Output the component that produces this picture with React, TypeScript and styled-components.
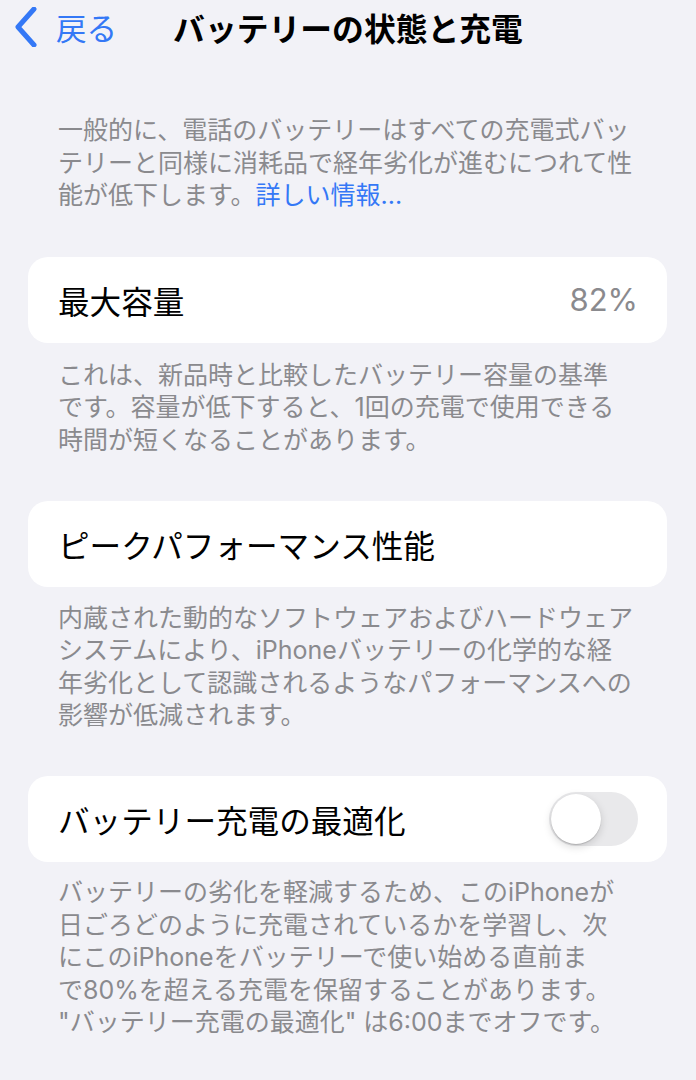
import styled, { createGlobalStyle } from 'styled-components';

const colors = {
  bg: '#f2f2f7',
  card: '#ffffff',
  text: '#000000',
  secondary: '#8a8a8e',
  blue: '#3478f6',
  track: '#e9e9eb',
};

const GlobalStyle = createGlobalStyle`
  html, body {
    margin: 0;
    padding: 0;
    background: ${colors.bg};
  }
  body {
    font-family: Inter, "Noto Sans CJK JP", "Noto Sans", sans-serif;
    -webkit-font-smoothing: antialiased;
  }
`;

const Page = styled.div`
  min-height: 1080px;
  background: ${colors.bg};
  padding: 0 29px 0 28px;
  box-sizing: border-box;
`;

const NavBar = styled.div`
  height: 54px;
  margin: 0 -29px 0 -28px;
  padding: 0 13px;
  display: grid;
  grid-template-columns: 1fr auto 1fr;
  align-items: center;
`;

const BackButton = styled.button`
  justify-self: start;
  display: flex;
  align-items: center;
  gap: 19px;
  padding: 0;
  border: none;
  background: transparent;
  color: ${colors.blue};
  font-family: inherit;
  font-size: 30.5px;
  cursor: pointer;
`;

const Title = styled.h1`
  margin: 0;
  font-size: 31.8px;
  font-weight: 700;
  color: ${colors.text};
  white-space: nowrap;
`;

const Footnote = styled.p<{ $top: number }>`
  margin: ${({ $top }) => $top}px 0 0;
  padding: 0 30px;
  font-size: 25px;
  line-height: 32.6px;
  color: ${colors.secondary};
  white-space: nowrap;
`;

const Link = styled.a`
  color: ${colors.blue};
  text-decoration: none;
`;

const Card = styled.div<{ $top: number }>`
  margin-top: ${({ $top }) => $top}px;
  height: 86px;
  padding: 0 29px 0 30px;
  background: ${colors.card};
  border-radius: 20px;
  display: flex;
  align-items: center;
  justify-content: space-between;
`;

const Label = styled.span`
  font-size: 31.6px;
  color: ${colors.text};
`;

const Value = styled.span`
  font-size: 31px;
  color: ${colors.secondary};
`;

const Toggle = styled.div<{ $on: boolean }>`
  width: 89px;
  height: 54px;
  border-radius: 27px;
  background: ${({ $on }) => ($on ? '#34c759' : colors.track)};
  padding: 2px;
  box-sizing: border-box;
  display: flex;
  justify-content: ${({ $on }) => ($on ? 'flex-end' : 'flex-start')};
`;

const Knob = styled.div`
  width: 50px;
  height: 50px;
  border-radius: 50%;
  background: #fff;
  box-shadow: 0 3px 8px rgba(0, 0, 0, 0.15), 0 1px 1px rgba(0, 0, 0, 0.16);
`;

const Chevron = () => (
  <svg width="24" height="40" viewBox="0 0 24 40" fill="none">
    <path
      d="M21 2 L5 20 L21 38"
      stroke={colors.blue}
      strokeWidth="5"
      strokeLinecap="round"
      strokeLinejoin="round"
    />
  </svg>
);

const App = () => (
  <>
    <GlobalStyle />
    <Page>
      <NavBar>
        <BackButton>
          <Chevron />
          戻る
        </BackButton>
        <Title>バッテリーの状態と充電</Title>
        <span />
      </NavBar>

      <Footnote $top={60}>
        一般的に、電話のバッテリーはすべての充電式バッ
        <br />
        テリーと同様に消耗品で経年劣化が進むにつれて性
        <br />
        能が低下します。<Link href="#">詳しい情報...</Link>
      </Footnote>

      <Card $top={45}>
        <Label>最大容量</Label>
        <Value>82%</Value>
      </Card>
      <Footnote $top={16}>
        これは、新品時と比較したバッテリー容量の基準
        <br />
        です。容量が低下すると、1回の充電で使用できる
        <br />
        時間が短くなることがあります。
      </Footnote>

      <Card $top={44}>
        <Label>ピークパフォーマンス性能</Label>
      </Card>
      <Footnote $top={15}>
        内蔵された動的なソフトウェアおよびハードウェア
        <br />
        システムにより、iPhoneバッテリーの化学的な経
        <br />
        年劣化として認識されるようなパフォーマンスへの
        <br />
        影響が低減されます。
      </Footnote>

      <Card $top={44}>
        <Label>バッテリー充電の最適化</Label>
        <Toggle $on={false}>
          <Knob />
        </Toggle>
      </Card>
      <Footnote $top={14}>
        バッテリーの劣化を軽減するため、このiPhoneが
        <br />
        日ごろどのように充電されているかを学習し、次
        <br />
        にこのiPhoneをバッテリーで使い始める直前ま
        <br />
        で80%を超える充電を保留することがあります。
        <br />
        "バッテリー充電の最適化" は6:00までオフです。
      </Footnote>
    </Page>
  </>
);

export default App;
